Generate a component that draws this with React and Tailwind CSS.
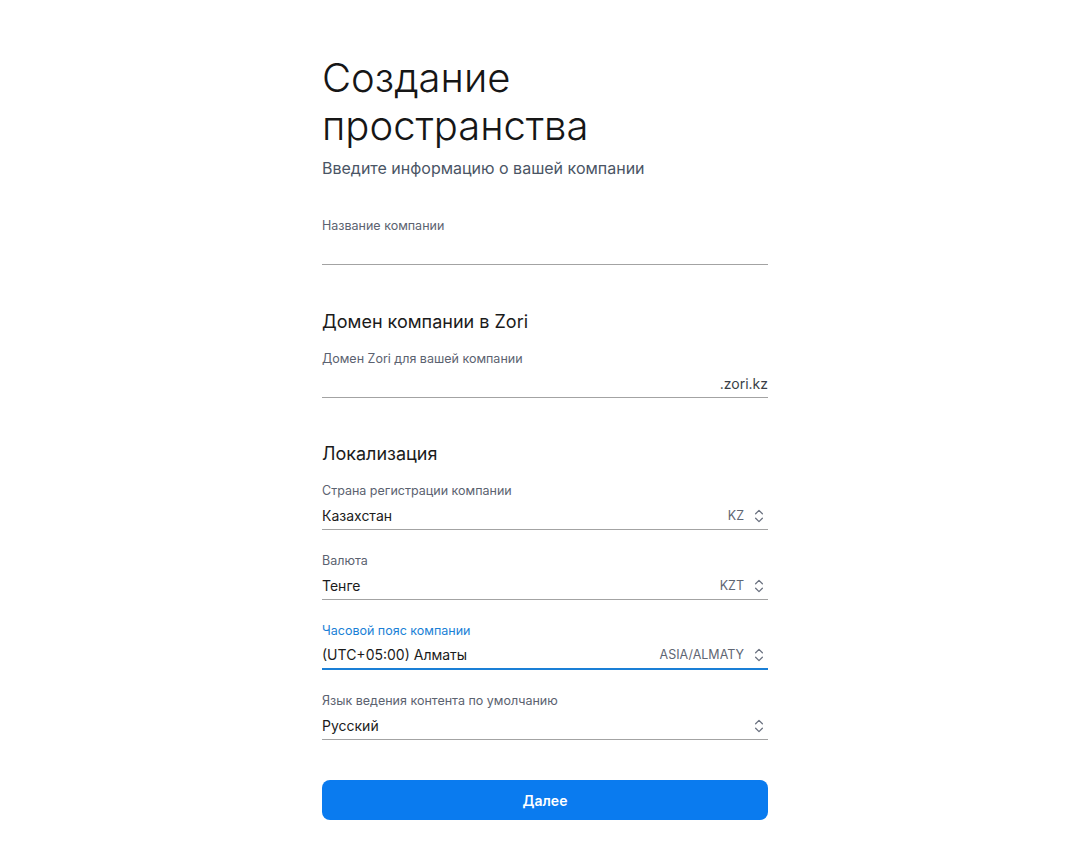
import React from 'react'

const Chevrons = () => (
  <svg width="18" height="18" viewBox="0 0 24 24" fill="none" stroke="#6b7280" strokeWidth="1.7" strokeLinecap="round" strokeLinejoin="round">
    <path d="m7.5 9 4.5-4.5 4.5 4.5" />
    <path d="m7.5 15 4.5 4.5 4.5-4.5" />
  </svg>
)

const Label = ({ children, active }) => (
  <div className={`text-[12.5px] leading-4 mb-[7px] ${active ? 'text-[#1a7fd6]' : 'text-[#5b6270]'}`}>{children}</div>
)

const SelectField = ({ label, value, code, active }) => (
  <div>
    <Label active={active}>{label}</Label>
    <div
      className={`flex items-center h-6 pb-1 ${active ? 'border-b-2 border-[#1a7fd6]' : 'border-b border-[#a3a3a3]'}`}
    >
      <span className="flex-1 text-[14px] leading-5 text-[#1b1b1b]">{value}</span>
      {code && <span className="text-[12.5px] leading-5 text-[#5f6673] uppercase mr-[6px]">{code}</span>}
      <span className="w-[18px] flex justify-center">
        <Chevrons />
      </span>
    </div>
  </div>
)

const App = () => {
  return (
    <div className="min-h-screen bg-white font-['Inter',sans-serif]">
      <div className="max-w-[446px] mx-auto pt-[54px] pb-10">
        <h1 className="text-[40px] leading-[48px] font-light text-[#161616]">Создание пространства</h1>
        <p className="mt-[6px] text-[16px] leading-6 text-[#4a5565]">Введите информацию о вашей компании</p>

        {/* Company name */}
        <div className="mt-[38px]">
          <Label>Название компании</Label>
          <input
            className="block w-full h-6 pb-1 border-b border-[#a3a3a3] text-[14px] leading-5 outline-none bg-transparent"
            defaultValue=""
          />
        </div>

        {/* Domain */}
        <h2 className="mt-[43px] text-[18px] leading-7 text-[#1b1b1b]">Домен компании в Zori</h2>
        <div className="mt-[15px]">
          <Label>Домен Zori для вашей компании</Label>
          <div className="flex items-center h-6 pb-1 border-b border-[#a3a3a3]">
            <input className="flex-1 min-w-0 text-[14px] leading-5 outline-none bg-transparent" defaultValue="" />
            <span className="text-[14px] leading-5 text-[#3a3f47]">.zori.kz</span>
          </div>
        </div>

        {/* Localization */}
        <h2 className="mt-[42px] text-[18px] leading-7 text-[#1b1b1b]">Локализация</h2>
        <div className="mt-[15px] flex flex-col gap-[23px]">
          <SelectField label="Страна регистрации компании" value="Казахстан" code="KZ" />
          <SelectField label="Валюта" value="Тенге" code="KZT" />
          <SelectField label="Часовой пояс компании" value="(UTC+05:00) Алматы" code="Asia/Almaty" active />
          <SelectField label="Язык ведения контента по умолчанию" value="Русский" />
        </div>

        <button className="mt-[40px] w-full h-10 rounded-lg bg-[#0a7bef] text-white text-[14px] font-semibold">
          Далее
        </button>
      </div>
    </div>
  )
}

export default App
